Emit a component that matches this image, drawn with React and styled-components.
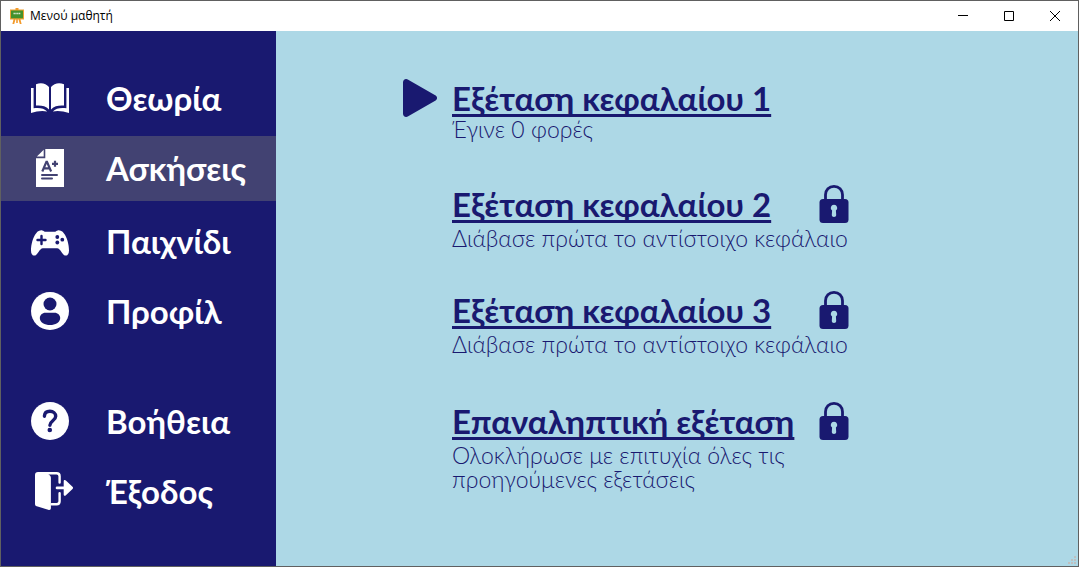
import React from 'react';
import styled, { createGlobalStyle } from 'styled-components';

const NAVY = '#191970';
const SKY = '#add8e6';
const ACTIVE = '#424272';

const GlobalStyle = createGlobalStyle`
  *, *::before, *::after { box-sizing: border-box; }
  body { margin: 0; background: ${SKY}; }
`;

const Window = styled.div`
  display: flex;
  flex-direction: column;
  min-height: 100vh;
  border: 1px solid #606060;
  background: ${SKY};
  font-family: 'Century Gothic', Lato, 'Noto Sans', sans-serif;
`;

const TitleBar = styled.header`
  display: flex;
  align-items: center;
  height: 30px;
  padding-left: 8px;
  background: #fff;
`;

const WindowTitle = styled.h1`
  flex: 1;
  margin: 0 0 0 5px;
  font: 400 12px/16px 'Segoe UI', 'Open Sans', sans-serif;
  color: #000;
`;

const CaptionButton = styled.button`
  display: flex;
  align-items: center;
  justify-content: center;
  width: 46px;
  height: 30px;
  padding: 0;
  border: 0;
  background: transparent;
  color: #000;
`;

const Body = styled.div`
  display: flex;
  flex: 1;
`;

const Sidebar = styled.nav`
  display: flex;
  flex-direction: column;
  gap: 8px;
  width: 275px;
  flex-shrink: 0;
  padding: 35px 0;
  background: ${NAVY};
`;

const NavGroup = styled.div`
  display: flex;
  flex-direction: column;
  gap: 5px;
  margin-top: ${(p) => (p.$apart ? '37px' : '0')};
`;

const NavButton = styled.button`
  display: grid;
  grid-template-columns: 75px 1fr;
  align-items: center;
  height: 65px;
  padding: 0 0 2px 30px;
  border: 0;
  background: ${(p) => (p.$active ? ACTIVE : 'transparent')};
  color: #fff;
  font-family: inherit;
  font-size: 33px;
  font-weight: 700;
  line-height: 38px;
  text-align: left;
  white-space: nowrap;
  cursor: pointer;
`;

const Icon = styled.svg`
  display: block;
  flex-shrink: 0;
  overflow: visible;
`;

const Main = styled.main`
  display: flex;
  flex: 1;
  flex-direction: column;
  justify-content: space-between;
  min-width: 0;
`;

const ExamList = styled.ul`
  display: flex;
  flex-direction: column;
  gap: 40px;
  margin: 0;
  padding: 48px 24px 0 127px;
  list-style: none;
`;

const Exam = styled.li`
  display: grid;
  grid-template-columns: 49px 1fr;
  min-height: 66px;
  margin-top: ${(p) => (p.$final ? '5px' : '0')};
  color: ${NAVY};
`;

const ExamHead = styled.div`
  display: flex;
  align-items: center;
  height: 38px;
`;

const ExamTitle = styled.div`
  min-width: 367px;
`;

const ExamLink = styled.a`
  color: ${NAVY};
  font-size: 33px;
  font-weight: 700;
  line-height: 38px;
  white-space: nowrap;
  text-decoration: underline;
  text-decoration-thickness: 3px;
  text-underline-offset: 3px;
  text-decoration-skip-ink: none;
`;

const ExamNote = styled.p`
  max-width: 410px;
  margin: ${(p) => (p.$locked ? '3px' : '0')} 0 0;
  font-size: 23px;
  font-weight: 300;
  line-height: 24px;
  white-space: pre-line;
`;

const GripRow = styled.div`
  display: flex;
  justify-content: flex-end;
  padding: 0 2px 2px 0;
`;

const AppIcon = () => (
  <Icon width="16" height="16" viewBox="0 0 16 16" aria-hidden="true">
    <path d="M6.5 0h3v2h-3zM4.6 11h2L5.2 16H3.4zM9.4 11h2l1.2 5h-1.8zM7.2 11h1.6v4H7.2z" fill="#f39a2b" />
    <rect x="1" y="1.5" width="14" height="10" fill="#f0a030" />
    <rect x="2" y="2.5" width="12" height="7.8" fill="#43912c" />
    <path d="M4.500 5.500h7" stroke="#d9ecd2" strokeWidth="1.400" strokeDasharray="1.4 .4" />
  </Icon>
);

const BookIcon = () => (
  <Icon width="38" height="30" viewBox="0 0 38 30" fill="#fff" aria-hidden="true">
    <path d="M5 1.200C10-.8 15 .3 18 4v22.400C14.600 22.800 10.200 22.300 5 22.600z" />
    <path d="M33 1.200C28-.8 23 .3 20 4v22.400c3.400-3.600 7.800-4.100 13-3.800z" />
    <path d="M0 5h2.600v20.200C8.600 24.400 13.200 25.300 16.200 28.400 11.400 27.300 5.600 28 0 30z" />
    <path d="M38 5h-2.600v20.200C29.400 24.400 24.800 25.300 21.800 28.400 26.600 27.300 32.400 28 38 30z" />
  </Icon>
);

const PaperIcon = () => (
  <Icon width="38" height="38" viewBox="0 0 38 38" aria-hidden="true">
    <path d="M14.300 0H33v38H5V9.200h9.300z" fill="#fff" />
    <path d="M12.700 .8v6.800H5.900z" fill="#fff" />
    <g fill="none" stroke={ACTIVE} strokeWidth="2.200">
      <path d="M11.300 22.500l4.100-9.700h.6l4.100 9.700M12.800 19.300h5.800" />
      <path d="M24 11.800v6M21 14.800h6" />
      <path d="M11 26h15M11 29.500h10" strokeLinecap="round" strokeWidth="2" />
    </g>
  </Icon>
);

const GamepadIcon = () => (
  <Icon width="38" height="30" viewBox="0 -4 38 30" aria-hidden="true">
    <path
      d="M5.200 3.200C6.800 1.100 9.200.1 11.200.4c1.500.3 2 1.400 3.500 1.400h8.600c1.500 0 2-1.100 3.500-1.400 2-.3 4.400.7 6 2.800C36 7.100 38 14.400 38 20.600c0 3.300-1.300 5-3.300 5-3.500 0-5-7.300-8.600-7.300H11.900c-3.600 0-5.100 7.300-8.600 7.300-2 0-3.300-1.700-3.300-5C0 14.400 2 7.100 5.200 3.200z"
      fill="#fff"
    />
    <path d="M10.500 6v8M6.500 10h8" stroke={NAVY} strokeWidth="2.400" strokeLinecap="round" />
    <g fill={NAVY}>
      <circle cx="26.300" cy="7" r="1.900" />
      <circle cx="26.300" cy="12.500" r="1.900" />
      <circle cx="31.300" cy="9.700" r="1.900" />
    </g>
  </Icon>
);

const ProfileIcon = () => (
  <Icon width="38" height="38" viewBox="0 0 38 38" aria-hidden="true">
    <circle cx="19" cy="19" r="19" fill="#fff" />
    <circle cx="19" cy="12" r="6.500" fill={NAVY} />
    <path d="M14.500 20.700h9c3.300 0 5.700 2.500 5.700 5.300 0 4.400-5 7-10.200 7S8.800 30.400 8.800 26c0-2.800 2.400-5.300 5.700-5.300z" fill={NAVY} />
  </Icon>
);

const HelpIcon = () => (
  <Icon width="38" height="38" viewBox="0 0 38 38" aria-hidden="true">
    <circle cx="19" cy="19" r="19" fill="#fff" />
    <path
      d="M13.400 14.200c.2-3.200 2.300-4.900 5.500-4.900 3.400 0 5.800 2 5.800 5 0 4.300-5.800 4.600-5.800 8.900"
      fill="none"
      stroke={NAVY}
      strokeWidth="3.400"
      strokeLinecap="round"
    />
    <circle cx="18.800" cy="28" r="2.300" fill={NAVY} />
  </Icon>
);

const ExitIcon = () => (
  <Icon width="42" height="38" viewBox="-4 0 42 38" aria-hidden="true">
    <path d="M3 0h8.500l2.700 3c1.200.6 1.700 1.500 1.700 3v30c0 1.700-1 2.300-2.700 1.800L1.800 34.300C.6 33.900 0 33.100 0 32V3c0-1.800 1.100-3 3-3z" fill="#fff" />
    <path d="M4 1.300h17.600c1.900 0 3 1.100 3 3v6.200M24.600 21.300v8c0 1.900-1.100 3-3 3h-5" fill="none" stroke="#fff" strokeWidth="2.400" strokeLinecap="round" />
    <path d="M22 15.900h8" stroke="#fff" strokeWidth="2.600" strokeLinecap="round" />
    <path d="M28.700 9.300c0-1.400 1.200-1.700 2.200-.8l6.600 6.300c.7.700.7 1.500 0 2.200l-6.600 6.300c-1 .9-2.200.6-2.200-.8z" fill="#fff" />
  </Icon>
);

const PlayIcon = () => (
  <Icon width="34" height="38" viewBox="0 0 34 38" fill={NAVY} aria-hidden="true">
    <path d="M0 3.500C0 .6 2.600-.8 5.200.7l27 15.500c2.500 1.500 2.500 4.100 0 5.600l-27 15.500C2.600 38.800 0 37.400 0 34.500z" />
  </Icon>
);

const LockIcon = () => (
  <Icon width="30" height="38" viewBox="0 0 30 38" role="img" aria-label="Κλειδωμένο">
    <path d="M6.500 16V9.800C6.500 4.900 10 1.300 15 1.300s8.500 3.600 8.500 8.500V16" fill="none" stroke={NAVY} strokeWidth="2.800" />
    <rect x=".5" y="14" width="29" height="24" rx="3.500" fill={NAVY} />
    <path d="M15 19.700a3.200 3.200 0 0 1 1.900 5.800l.3 4.500c0 1.200-.9 2-2.200 2s-2.200-.8-2.200-2l.3-4.500A3.200 3.200 0 0 1 15 19.700z" fill={SKY} />
  </Icon>
);

const Grip = () => (
  <Icon width="8" height="8" viewBox="0 0 8 8" fill="#bfbfbf" aria-hidden="true">
    <path d="M6 0h2v2H6zM3 3h2v2H3zM6 3h2v2H6zM0 6h2v2H0zM3 6h2v2H3zM6 6h2v2H6z" />
  </Icon>
);

const NAV_GROUPS = [
  [
    { label: 'Θεωρία', icon: BookIcon },
    { label: 'Ασκήσεις', icon: PaperIcon, active: true },
  ],
  [
    { label: 'Παιχνίδι', icon: GamepadIcon },
    { label: 'Προφίλ', icon: ProfileIcon },
  ],
  [
    { label: 'Βοήθεια', icon: HelpIcon },
    { label: 'Έξοδος', icon: ExitIcon },
  ],
];

const EXAMS = [
  { title: 'Εξέταση κεφαλαίου 1', note: 'Έγινε 0 φορές' },
  { title: 'Εξέταση κεφαλαίου 2', note: 'Διάβασε πρώτα το αντίστοιχο κεφάλαιο', locked: true },
  { title: 'Εξέταση κεφαλαίου 3', note: 'Διάβασε πρώτα το αντίστοιχο κεφάλαιο', locked: true },
  {
    title: 'Επαναληπτική εξέταση',
    note: 'Ολοκλήρωσε με επιτυχία όλες τις\nπροηγούμενες εξετάσεις',
    locked: true,
    final: true,
  },
];

export default function App() {
  return (
    <>
      <GlobalStyle />
      <Window>
        <TitleBar>
          <AppIcon />
          <WindowTitle>Μενού μαθητή</WindowTitle>
          <CaptionButton aria-label="Ελαχιστοποίηση">
            <Icon width="10" height="10" viewBox="0 0 10 10"><path d="M0 4h10v1H0z" /></Icon>
          </CaptionButton>
          <CaptionButton aria-label="Μεγιστοποίηση">
            <Icon width="10" height="10" viewBox="0 0 10 10"><path d="M.5.5h9v9h-9z" fill="none" stroke="#000" /></Icon>
          </CaptionButton>
          <CaptionButton aria-label="Κλείσιμο">
            <Icon width="10" height="10" viewBox="0 0 10 10"><path d="M0 0l10 10M10 0L0 10" fill="none" stroke="#000" /></Icon>
          </CaptionButton>
        </TitleBar>
        <Body>
          <Sidebar>
            {NAV_GROUPS.map((group, i) => (
              <NavGroup key={i} $apart={i === 2}>
                {group.map(({ label, icon: Glyph, active }) => (
                  <NavButton key={label} $active={active} aria-current={active ? 'page' : undefined}>
                    <Glyph />
                    <span>{label}</span>
                  </NavButton>
                ))}
              </NavGroup>
            ))}
          </Sidebar>
          <Main>
            <ExamList>
              {EXAMS.map((exam) => (
                <Exam key={exam.title} $final={exam.final}>
                  <div>{!exam.locked && <PlayIcon />}</div>
                  <div>
                    <ExamHead>
                      <ExamTitle>
                        <ExamLink href="#">{exam.title}</ExamLink>
                      </ExamTitle>
                      {exam.locked && <LockIcon />}
                    </ExamHead>
                    <ExamNote $locked={exam.locked}>{exam.note}</ExamNote>
                  </div>
                </Exam>
              ))}
            </ExamList>
            <GripRow>
              <Grip />
            </GripRow>
          </Main>
        </Body>
      </Window>
    </>
  );
}
